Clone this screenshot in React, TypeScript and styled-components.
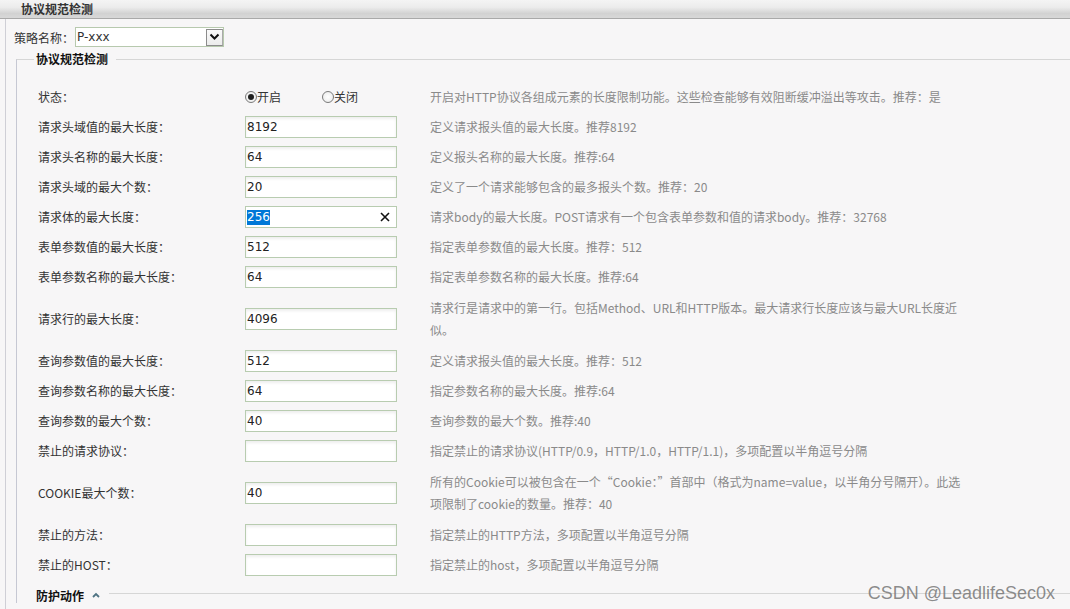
import React from "react";
import styled, { createGlobalStyle } from "styled-components";

const Global = createGlobalStyle`
  html, body { margin: 0; padding: 0; background: #f7f6f7; }
  body {
    font-family: "Noto Sans CJK SC", "DejaVu Sans", sans-serif;
    font-size: 12px;
    color: #333;
    overflow: hidden;
  }
`;

const Page = styled.div`
  position: relative;
  width: 1070px;
  height: 609px;
  overflow: hidden;
  background: #f7f6f7;
`;

const Header = styled.div`
  height: 18px;
  border-bottom: 1px solid #a9a9a9;
  background: linear-gradient(#f4f4f4 0%, #ececec 40%, #d2d2d2 75%, #d8d8d8 100%);
  display: flex;
  align-items: center;
  padding-left: 21px;
`;

const HeaderTitle = styled.span`
  font-weight: 700;
  font-size: 12px;
  color: #333;
  line-height: 18px;
`;

const Body = styled.div`
  margin-left: 5px;
  border-left: 1px solid #cfcfd6;
  padding-top: 8px;
  height: 600px;
`;

const PolicyRow = styled.div`
  display: flex;
  align-items: center;
  padding-left: 8px;
  height: 20px;
`;

const PolicyLabel = styled.span`
  color: #333;
  width: 61px;
`;

const SelectBox = styled.div`
  display: flex;
  width: 147px;
  height: 18px;
  border: 1px solid #b7c9ae;
  background: #fff;
`;

const NativeSelect = styled.select`
  flex: 1;
  appearance: none;
  border: none;
  outline: none;
  background: transparent;
  font-family: "DejaVu Sans", sans-serif;
  font-size: 12px;
  color: #333;
  padding: 0 0 0 1px;
  height: 18px;
`;

const ArrowBox = styled.span`
  width: 17px;
  height: 17px;
  border: 1px solid #8c8c8c;
  border-right-color: #aaa;
  box-sizing: border-box;
  background: linear-gradient(#fafafa, #ececec);
  display: flex;
  align-items: center;
  justify-content: center;
  align-self: center;
`;

const Fieldset = styled.fieldset`
  margin: 4px 0 0 10px;
  padding: 15px 0 0 21px;
  border: none;
  border-top: 1px solid #d6d6d6;
  border-left: 1px solid #c6c8d3;
  min-width: 0;
`;

const Legend = styled.legend`
  font-weight: 700;
  font-size: 12px;
  color: #111;
  padding: 0 8px 0 2px;
  margin-left: -4px;
  line-height: 16px;
`;

const Row = styled.div<{ $tall?: boolean }>`
  display: grid;
  grid-template-columns: 207px 185px auto;
  align-items: center;
  padding: ${(p) => (p.$tall ? "5px 0" : "4px 0")};
  min-height: 22px;
`;

const Label = styled.span`
  color: #333;
  line-height: 22px;
  white-space: nowrap;
`;

const Desc = styled.span`
  color: #8a8a8a;
  line-height: 22px;
  white-space: nowrap;
`;

const TextInput = styled.input`
  box-sizing: border-box;
  width: 152px;
  height: 22px;
  border: 1px solid #b8ccb0;
  background: #fff;
  box-shadow: inset 0 2px 3px rgba(0, 0, 0, 0.07);
  font-family: "DejaVu Sans", sans-serif;
  font-size: 12px;
  color: #222;
  padding: 0 1px;
  outline: none;
`;

const FakeInput = styled.div`
  box-sizing: border-box;
  width: 152px;
  height: 22px;
  border: 1px solid #b8ccb0;
  background: #fff;
  display: flex;
  align-items: center;
  padding: 0 6px 0 1px;
  font-family: "DejaVu Sans", sans-serif;
  font-size: 12px;
`;

const Selected = styled.span`
  background: #0078d7;
  color: #fff;
  line-height: 15px;
`;

const ClearIcon = styled.svg`
  margin-left: auto;
`;

const RadioGroup = styled.div`
  display: flex;
  align-items: center;
`;

const RadioLabel = styled.label<{ $w: number }>`
  display: flex;
  align-items: center;
  width: ${(p) => p.$w}px;
  color: #333;
  line-height: 22px;
`;

const RadioDot = styled.input`
  appearance: none;
  margin: 0;
  width: 12px;
  height: 12px;
  border-radius: 50%;
  border: 1px solid #7a7a7a;
  background: radial-gradient(#fff, #e8e8e8);
  box-sizing: border-box;
  display: grid;
  place-items: center;
  &:checked::after {
    content: "";
    width: 6px;
    height: 6px;
    border-radius: 50%;
    background: #1f1f1f;
  }
`;

const SectionHead = styled.div`
  display: flex;
  align-items: center;
  margin: 7px 0 0 -2px;
  height: 16px;
`;

const SectionTitle = styled.span`
  font-weight: 700;
  color: #111;
`;

const Chevron = styled.svg`
  margin: 0 9px 0 8px;
`;

const SectionLine = styled.div`
  flex: 1;
  border-top: 1px solid #d6d6d6;
  margin-top: -3px;
`;

const Watermark = styled.div`
  position: absolute;
  right: 15px;
  bottom: 5px;
  font-family: "Liberation Sans", Arial, sans-serif;
  font-size: 18px;
  color: rgba(120, 120, 120, 0.85);
`;

type RowData = {
  label: string;
  value: string;
  desc: string | string[];
  selected?: boolean;
};

const rows: RowData[] = [
  { label: "请求头域值的最大长度：", value: "8192", desc: "定义请求报头值的最大长度。推荐8192" },
  { label: "请求头名称的最大长度：", value: "64", desc: "定义报头名称的最大长度。推荐:64" },
  { label: "请求头域的最大个数：", value: "20", desc: "定义了一个请求能够包含的最多报头个数。推荐：20" },
  {
    label: "请求体的最大长度：",
    value: "256",
    desc: "请求body的最大长度。POST请求有一个包含表单参数和值的请求body。推荐：32768",
    selected: true,
  },
  { label: "表单参数值的最大长度：", value: "512", desc: "指定表单参数值的最大长度。推荐：512" },
  { label: "表单参数名称的最大长度：", value: "64", desc: "指定表单参数名称的最大长度。推荐:64" },
  {
    label: "请求行的最大长度：",
    value: "4096",
    desc: [
      "请求行是请求中的第一行。包括Method、URL和HTTP版本。最大请求行长度应该与最大URL长度近",
      "似。",
    ],
  },
  { label: "查询参数值的最大长度：", value: "512", desc: "定义请求报头值的最大长度。推荐：512" },
  { label: "查询参数名称的最大长度：", value: "64", desc: "指定参数名称的最大长度。推荐:64" },
  { label: "查询参数的最大个数：", value: "40", desc: "查询参数的最大个数。推荐:40" },
  {
    label: "禁止的请求协议：",
    value: "",
    desc: "指定禁止的请求协议(HTTP/0.9，HTTP/1.0，HTTP/1.1)，多项配置以半角逗号分隔",
  },
  {
    label: "COOKIE最大个数：",
    value: "40",
    desc: [
      "所有的Cookie可以被包含在一个“Cookie：”首部中（格式为name=value，以半角分号隔开）。此选",
      "项限制了cookie的数量。推荐：40",
    ],
  },
  { label: "禁止的方法：", value: "", desc: "指定禁止的HTTP方法，多项配置以半角逗号分隔" },
  { label: "禁止的HOST：", value: "", desc: "指定禁止的host，多项配置以半角逗号分隔" },
];

export default function App() {
  return (
    <Page>
      <Global />
      <Header>
        <HeaderTitle>协议规范检测</HeaderTitle>
      </Header>
      <Body>
        <PolicyRow>
          <PolicyLabel>策略名称：</PolicyLabel>
          <SelectBox>
            <NativeSelect defaultValue="P-xxx">
              <option value="P-xxx">P-xxx</option>
            </NativeSelect>
            <ArrowBox>
              <svg width="11" height="8" viewBox="0 0 11 8">
                <polyline points="1.5,1.5 5.5,5.5 9.5,1.5" fill="none" stroke="#111" strokeWidth="2" />
              </svg>
            </ArrowBox>
          </SelectBox>
        </PolicyRow>
        <Fieldset>
          <Legend>协议规范检测</Legend>
          <Row>
            <Label>状态：</Label>
            <RadioGroup>
              <RadioLabel $w={77}>
                <RadioDot type="radio" name="state" defaultChecked />
                开启
              </RadioLabel>
              <RadioLabel $w={60}>
                <RadioDot type="radio" name="state" />
                关闭
              </RadioLabel>
            </RadioGroup>
            <Desc>开启对HTTP协议各组成元素的长度限制功能。这些检查能够有效阻断缓冲溢出等攻击。推荐：是</Desc>
          </Row>
          {rows.map((r) => {
            const lines = Array.isArray(r.desc) ? r.desc : [r.desc];
            return (
              <Row key={r.label} $tall={lines.length > 1}>
                <Label>{r.label}</Label>
                {r.selected ? (
                  <FakeInput>
                    <Selected>{r.value}</Selected>
                    <ClearIcon width="10" height="10" viewBox="0 0 10 10">
                      <path d="M1 1 L9 9 M9 1 L1 9" stroke="#111" strokeWidth="1.6" />
                    </ClearIcon>
                  </FakeInput>
                ) : (
                  <TextInput defaultValue={r.value} />
                )}
                <Desc>
                  {lines.map((l, i) => (
                    <React.Fragment key={i}>
                      {i > 0 && <br />}
                      {l}
                    </React.Fragment>
                  ))}
                </Desc>
              </Row>
            );
          })}
          <SectionHead>
            <SectionTitle>防护动作</SectionTitle>
            <Chevron width="8" height="6" viewBox="0 0 8 6">
              <polyline points="1,5 4,2 7,5" fill="none" stroke="#4f7383" strokeWidth="1.8" />
            </Chevron>
            <SectionLine />
          </SectionHead>
        </Fieldset>
      </Body>
      <Watermark>CSDN @LeadlifeSec0x</Watermark>
    </Page>
  );
}
